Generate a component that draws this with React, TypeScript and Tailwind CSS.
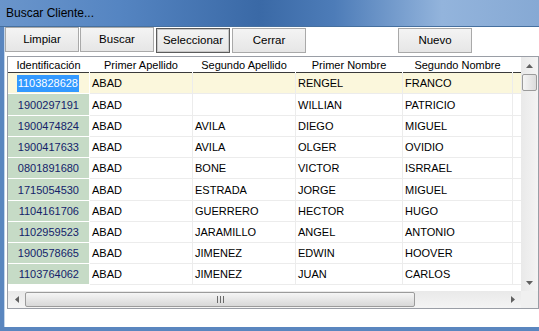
import React from 'react';

const rows = [
  ['1103828628', 'ABAD', '', 'RENGEL', 'FRANCO'],
  ['1900297191', 'ABAD', '', 'WILLIAN', 'PATRICIO'],
  ['1900474824', 'ABAD', 'AVILA', 'DIEGO', 'MIGUEL'],
  ['1900417633', 'ABAD', 'AVILA', 'OLGER', 'OVIDIO'],
  ['0801891680', 'ABAD', 'BONE', 'VICTOR', 'ISRRAEL'],
  ['1715054530', 'ABAD', 'ESTRADA', 'JORGE', 'MIGUEL'],
  ['1104161706', 'ABAD', 'GUERRERO', 'HECTOR', 'HUGO'],
  ['1102959523', 'ABAD', 'JARAMILLO', 'ANGEL', 'ANTONIO'],
  ['1900578665', 'ABAD', 'JIMENEZ', 'EDWIN', 'HOOVER'],
  ['1103764062', 'ABAD', 'JIMENEZ', 'JUAN', 'CARLOS'],
];

// rows 2 and 6 are a pixel taller in the original grid
const rowH = ['h-[21px]', 'h-[22px]', 'h-[21px]', 'h-[21px]', 'h-[21px]', 'h-[22px]', 'h-[21px]', 'h-[21px]', 'h-[21px]', 'h-[21px]'];

const headers = [
  { label: 'Identificación', w: 'w-[82px]' },
  { label: 'Primer Apellido', w: 'w-[103px]' },
  { label: 'Segundo Apellido', w: 'w-[103px]' },
  { label: 'Primer Nombre', w: 'w-[107px]' },
  { label: 'Segundo Nombre', w: 'w-[110px]' },
];

const Arrow = ({ dir }: { dir: 'up' | 'down' | 'left' | 'right' }) => {
  const pts = {
    up: '0,4 3.5,0 7,4',
    down: '0,0 3.5,4 7,0',
    left: '4,0 0,3.5 4,7',
    right: '0,0 4,3.5 0,7',
  }[dir];
  const vertical = dir === 'up' || dir === 'down';
  return (
    <svg width={vertical ? 7 : 4} height={vertical ? 4 : 7} viewBox={vertical ? '0 0 7 4' : '0 0 4 7'}>
      <polygon points={pts} fill="#606060" />
    </svg>
  );
};

const Button = ({ label, focused }: { label: string; focused?: boolean }) => (
  <button
    className={`h-[25px] w-[74px] bg-gradient-to-b from-[#f4f4f4] to-[#e6e6e6] text-[11.5px] text-black ${
      focused ? 'border border-[#5c5c5c] shadow-[inset_0_0_0_1px_#c8c8c8]' : 'border border-[#a9a9a9]'
    }`}
  >
    {label}
  </button>
);

const App = () => {
  return (
    <div className="w-[539px] h-[331px] flex flex-col overflow-hidden font-['Liberation_Sans',Arial,sans-serif] bg-[#5a86bf]">
      {/* title bar */}
      <div className="h-[27px] shrink-0 flex items-center pl-[6px] text-[12px] text-black bg-[linear-gradient(90deg,#6a95cb_0%,#5585c2_22%,#3a69a6_48%,#4d7cb8_62%,#93b4dc_82%,#86a9d4_100%)] border-b border-[#46709f]">
        Buscar Cliente...
      </div>

      <div className="flex-1 flex pl-[4px] pb-[4px]">
        <div className="flex-1 flex flex-col bg-white border-l border-[#c3d5ea]">
          {/* toolbar */}
          <div className="flex items-start h-[29px]">
            <div className="flex gap-[1px]">
              <Button label="Limpiar" />
              <Button label="Buscar" />
              <div className="ml-[1px]">
                <Button label="Seleccionar" focused />
              </div>
              <div className="ml-[1px]">
                <Button label="Cerrar" />
              </div>
            </div>
            <div className="ml-[92px]">
              <Button label="Nuevo" />
            </div>
          </div>

          {/* grid */}
          <div className="ml-[2px] w-[532px] h-[253px] border border-[#9a9ea6] flex flex-col">
            <div className="flex flex-1 min-h-0">
              <div className="flex-1 flex flex-col overflow-hidden">
                <div className="flex h-[16px] shrink-0 bg-white">
                  {headers.map((h) => (
                    <div key={h.label} className={`${h.w} shrink-0 border-r border-white`}>
                      <div className="h-full border-b border-[#3a3a3a] text-[11px] text-black text-center leading-[17px]">
                        {h.label}
                      </div>
                    </div>
                  ))}
                  <div className="flex-1 border-b border-[#3a3a3a]" />
                </div>
                {rows.map((r, i) => {
                  const sel = i === 0;
                  return (
                    <div key={r[0]} className={`flex ${rowH[i]} shrink-0 ${sel ? 'bg-[#fbf7dc]' : 'bg-white'}`}>
                      <div
                        className={`w-[82px] shrink-0 border-r border-b border-white flex items-center justify-end pr-[10px] pt-[1px] text-[11px] ${
                          sel ? 'bg-[#fbf7dc]' : 'bg-[#c6dbc6] text-[#14236a]'
                        }`}
                      >
                        <span className={sel ? 'bg-[#3399ff] text-white px-[1px]' : ''}>{r[0]}</span>
                      </div>
                      {r.slice(1).map((c, j) => (
                        <div
                          key={j}
                          className={`${headers[j + 1].w} shrink-0 border-r border-b border-[#ececec] flex items-center pl-[2px] pt-[1px] text-[11px] text-black`}
                        >
                          {c}
                        </div>
                      ))}
                      <div className="flex-1 border-b border-[#ececec]" />
                    </div>
                  );
                })}
              </div>
              {/* vertical scrollbar */}
              <div className="w-[17px] shrink-0 flex flex-col bg-gradient-to-r from-[#e9e9e9] to-[#f4f4f4]">
                <div className="h-[17px] flex items-center justify-center">
                  <Arrow dir="up" />
                </div>
                <div className="mx-[1px] h-[17px] rounded-[2px] border border-[#9b9b9b] bg-gradient-to-r from-[#f5f5f5] to-[#dcdcdc]" />
                <div className="flex-1" />
                <div className="h-[17px] flex items-center justify-center">
                  <Arrow dir="down" />
                </div>
              </div>
            </div>
            {/* horizontal scrollbar */}
            <div className="h-[17px] shrink-0 flex">
              <div className="flex-1 flex bg-gradient-to-b from-[#e9e9e9] to-[#f4f4f4]">
                <div className="w-[17px] flex items-center justify-center">
                  <Arrow dir="left" />
                </div>
                <div className="w-[390px] my-[1px] rounded-[2px] border border-[#9b9b9b] bg-gradient-to-b from-[#f5f5f5] to-[#d8d8d8] flex items-center justify-center">
                  <div className="flex gap-[2px]">
                    <div className="w-[1px] h-[7px] bg-[#6a6a6a]" />
                    <div className="w-[1px] h-[7px] bg-[#6a6a6a]" />
                    <div className="w-[1px] h-[7px] bg-[#6a6a6a]" />
                  </div>
                </div>
                <div className="flex-1" />
                <div className="w-[17px] flex items-center justify-center">
                  <Arrow dir="right" />
                </div>
              </div>
              <div className="w-[17px] bg-[#f0f0f0]" />
            </div>
          </div>
        </div>
      </div>
    </div>
  );
};

export default App;
